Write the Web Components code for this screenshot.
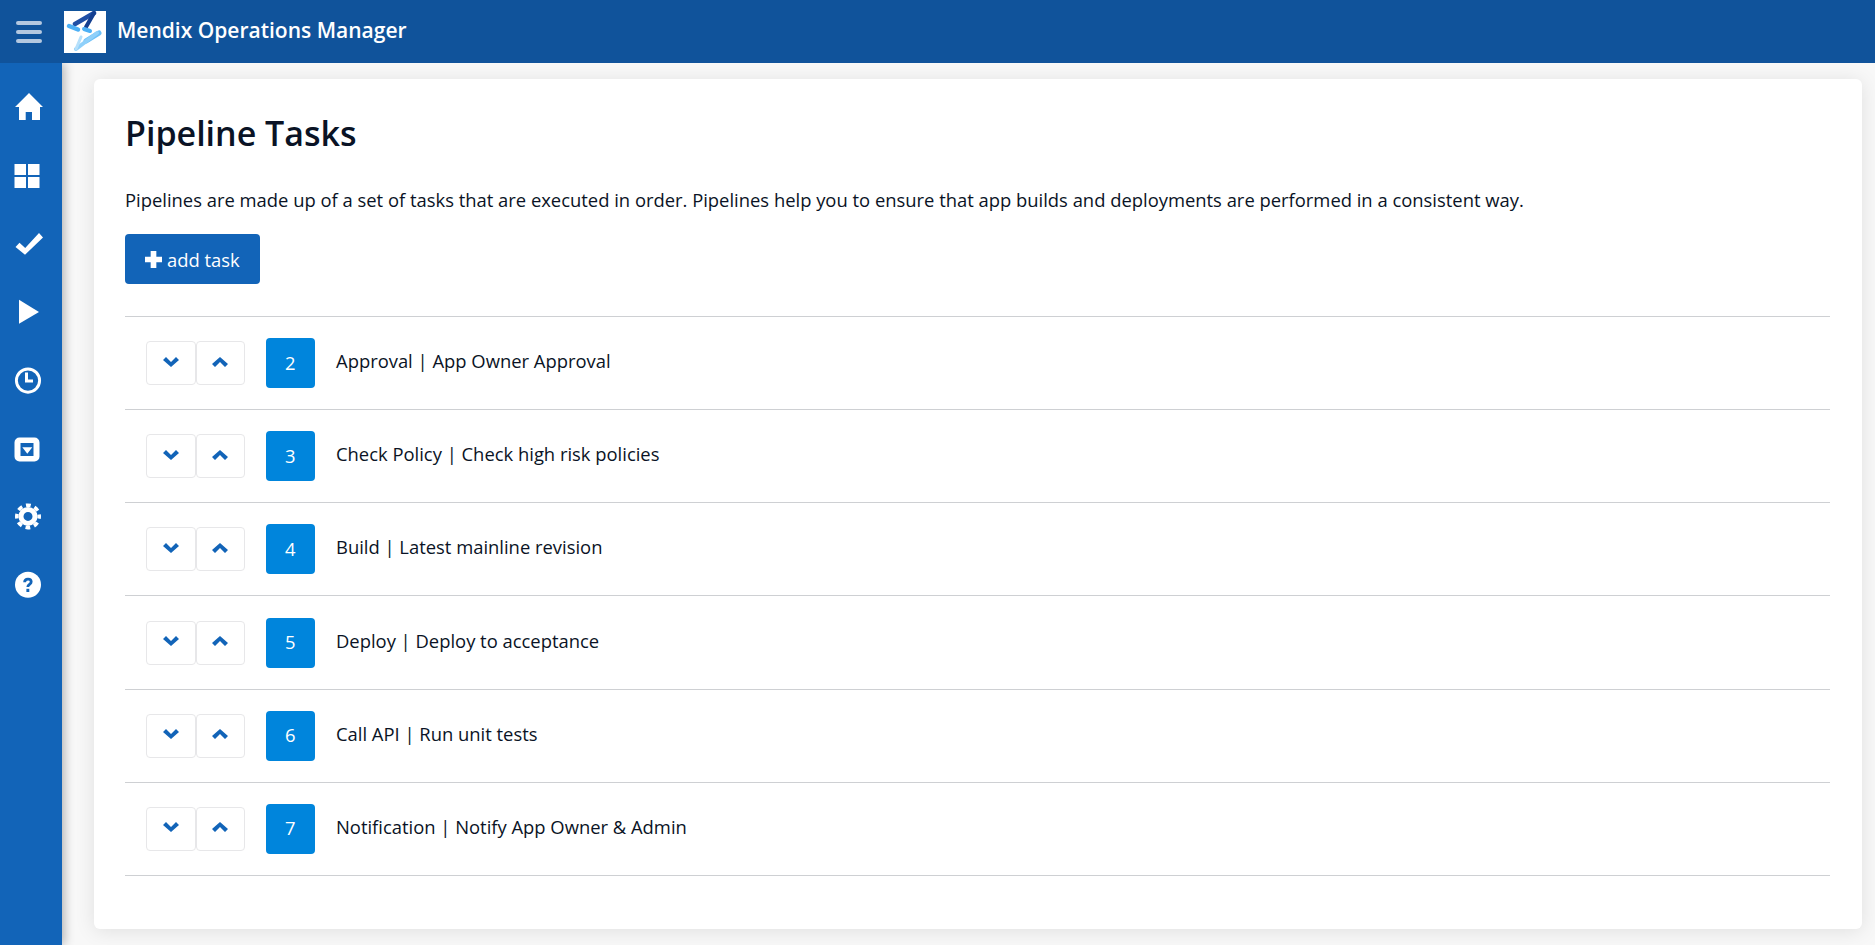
<!DOCTYPE html>
<html>
<head>
<meta charset="utf-8">
<title>Pipeline Tasks</title>
<style>
html, body { margin: 0; height: 100%; overflow: hidden; }
body { font-family: "Open Sans", sans-serif; color: #0a1325; background: #f8f8f8; }
</style>
</head>
<body>
<ops-layout>
	<ops-header slot="header" title="Mendix Operations Manager"></ops-header>
	<ops-sidebar slot="nav">
		<ops-nav-item icon="home"></ops-nav-item>
		<ops-nav-item icon="grid"></ops-nav-item>
		<ops-nav-item icon="check"></ops-nav-item>
		<ops-nav-item icon="play"></ops-nav-item>
		<ops-nav-item icon="clock"></ops-nav-item>
		<ops-nav-item icon="box"></ops-nav-item>
		<ops-nav-item icon="gear"></ops-nav-item>
		<ops-nav-item icon="help"></ops-nav-item>
	</ops-sidebar>
	<ops-card>
		<h1 slot="title">Pipeline Tasks</h1>
		<span slot="intro">Pipelines are made up of a set of tasks that are executed in order. Pipelines help you to ensure that app builds and deployments are performed in a consistent way.</span>
		<ops-add-button slot="action">add task</ops-add-button>
		<task-row order="2">Approval | App Owner Approval</task-row>
		<task-row order="3">Check Policy | Check high risk policies</task-row>
		<task-row order="4">Build | Latest mainline revision</task-row>
		<task-row order="5">Deploy | Deploy to acceptance</task-row>
		<task-row order="6">Call API | Run unit tests</task-row>
		<task-row order="7">Notification | Notify App Owner &amp; Admin</task-row>
	</ops-card>
</ops-layout>
<script>
// all icons sit in a 28x28 box, some run slightly over it like the icon font did
const ICONS = {
	home: '<path d="M15 0 1 14h4v13h6.700v-8h6.300v8h8V14h3z"/>',
	grid: '<path d="M.5 2.900H12V14H.5zM14 2.900h11.500V14H14zM.5 16H12v10.900H.5zM14 16h11.500v10.900H14z"/>',
	check: '<path d="M1.500 18 5.500 13.800l5.700 5.200L25 4l4 4.500L11 25.800z"/>',
	play: '<path d="M5 2.700 25 15 5 26.700z"/>',
	clock: '<circle cx="14" cy="15.600" r="11.600" fill="none" stroke="#fff" stroke-width="2.900"/><path d="M11 7.600h3v7h5v3h-8z"/>',
	box: '<path fill-rule="evenodd" d="M5.500 3.500h15a5 5 0 0 1 5 5v14a5 5 0 0 1-5 5h-15a5 5 0 0 1-5-5v-14a5 5 0 0 1 5-5zM6.500 9v13h13V9zM8.300 13.200h10l-5 6.600z"/>',
	gear: '<g fill="none" stroke="#fff"><circle cx="14" cy="14.400" r="11.200" stroke-width="3.600" stroke-dasharray="4.800 4" stroke-dashoffset="2.400"/><circle cx="14" cy="14.400" r="7" stroke-width="5"/></g>',
	help: '<circle cx="14" cy="14.800" r="13"/><path d="M10.600 12.200c.2-4 6.400-4.200 6.600-.4.1 2.600-3.400 2.600-3.400 5.200" fill="none" stroke="#1264b8" stroke-width="2.800"/><rect x="12.400" y="18.800" width="2.900" height="3.200" fill="#1264b8"/>'
};

class OpsLayout extends HTMLElement {
	constructor() {
		super();
		this.attachShadow({ mode: "open" });
		this.shadowRoot.innerHTML = `<style>
:host {
	display: grid;
	grid-template-columns: 62px 1fr;
	grid-template-rows: 63px 1fr;
	height: 100vh;
}
::slotted([slot=header]) { grid-column: 1 / 3; }
#main {
	min-width: 0;
	padding: 16px 13px 16px 32px;
	box-sizing: border-box;
	display: flex;
	min-height: 0;
}
</style>
<slot name="header"></slot>
<slot name="nav"></slot>
<div id="main"><slot></slot></div>`;
	}
}
customElements.define("ops-layout", OpsLayout);

class OpsHeader extends HTMLElement {
	constructor() {
		super();
		this.attachShadow({ mode: "open" });
		this.shadowRoot.innerHTML = `<style>
:host {
	display: flex;
	align-items: center;
	background: #10539b;
	color: #fff;
	height: 63px;
	position: relative;
	z-index: 2;
}
#burger {
	width: 62px;
	display: flex;
	flex-direction: column;
	align-items: center;
	gap: 5px;
	padding-right: 4px;
	box-sizing: border-box;
}
#burger i {
	display: block;
	width: 26px;
	height: 4px;
	border-radius: 2px;
	background: #b4c8e0;
}
#logo {
	width: 42px;
	height: 42px;
	margin-left: 2px;
	background: #fff;
	display: block;
}
#title {
	margin-left: 11px;
	padding-bottom: 3px;
	font-size: 21px;
	font-weight: 600;
}
</style>
<div id="burger"><i></i><i></i><i></i></div>
<svg id="logo" viewBox="0 0 42 42">
	<g fill="none" stroke-linecap="round" style="filter: blur(0.6px)">
		<path d="M30 2 11 13" stroke="#1f4fa5" stroke-width="4.500"/>
		<path d="M30 2 22 16" stroke="#143f90" stroke-width="4"/>
		<path d="M5 15l9 3.500" stroke="#4db0f5" stroke-width="4.500"/>
		<path d="M20 18l6 2" stroke="#4db0f5" stroke-width="4"/>
		<path d="M35 22l-13 8" stroke="#6cc0f8" stroke-width="5"/>
		<path d="M12 38l21-16" stroke="#8fd0fa" stroke-width="4"/>
		<path d="M12 38l5-12" stroke="#b6e0fb" stroke-width="3"/>
	</g>
</svg>
<div id="title"></div>`;
	}
	connectedCallback() {
		this.shadowRoot.querySelector("#title").textContent = this.getAttribute("title");
		this.removeAttribute("title");
	}
}
customElements.define("ops-header", OpsHeader);

class OpsSidebar extends HTMLElement {
	constructor() {
		super();
		this.attachShadow({ mode: "open" });
		this.shadowRoot.innerHTML = `<style>
:host {
	display: flex;
	flex-direction: column;
	background: #1264b8;
	padding-top: 10px;
	box-shadow: 2px 0 10px rgba(0,0,0,0.3);
	position: relative;
	z-index: 1;
}
</style><slot></slot>`;
	}
}
customElements.define("ops-sidebar", OpsSidebar);

class OpsNavItem extends HTMLElement {
	constructor() {
		super();
		this.attachShadow({ mode: "open" });
	}
	connectedCallback() {
		this.shadowRoot.innerHTML = `<style>
:host {
	display: flex;
	height: 68.100px;
	align-items: center;
	justify-content: center;
	padding-right: 6px;
	box-sizing: border-box;
}
svg { width: 28px; height: 28px; fill: #fff; display: block; overflow: visible; }
</style><svg viewBox="0 0 28 28">${ICONS[this.getAttribute("icon")]}</svg>`;
	}
}
customElements.define("ops-nav-item", OpsNavItem);

class OpsCard extends HTMLElement {
	constructor() {
		super();
		this.attachShadow({ mode: "open" });
		this.shadowRoot.innerHTML = `<style>
:host {
	display: block;
	flex: 1;
	background: #fff;
	border-radius: 6px;
	box-shadow: 0 2px 20px rgba(0,0,0,0.1);
	padding: 31px 32px 0 31px;
	box-sizing: border-box;
}
::slotted(h1) {
	margin: 0;
	font-size: 34px;
	line-height: 46px;
	font-weight: 600;
	color: #0a1325;
}
#intro {
	margin-top: 32px;
	font-size: 18.400px;
	line-height: 24px;
}
#action { margin-top: 22px; }
#list {
	margin-top: 32px;
	border-top: 1px solid #ced0d3;
}
</style>
<slot name="title"></slot>
<div id="intro"><slot name="intro"></slot></div>
<div id="action"><slot name="action"></slot></div>
<div id="list"><slot></slot></div>`;
	}
}
customElements.define("ops-card", OpsCard);

class OpsAddButton extends HTMLElement {
	constructor() {
		super();
		this.attachShadow({ mode: "open" });
		this.shadowRoot.innerHTML = `<style>
:host {
	display: inline-flex;
	align-items: center;
	gap: 5px;
	height: 50px;
	box-sizing: border-box;
	padding: 0 20px;
	background: #1264b8;
	border-radius: 4px;
	color: #fff;
	font-size: 18.400px;
	vertical-align: top;
}
svg { width: 17px; height: 17px; fill: #fff; display: block; }
</style>
<svg viewBox="0 0 18 18"><path d="M6 0h6v6h6v6h-6v6H6v-6H0V6h6z"/></svg>
<slot></slot>`;
	}
}
customElements.define("ops-add-button", OpsAddButton);

class TaskRow extends HTMLElement {
	constructor() {
		super();
		this.attachShadow({ mode: "open" });
	}
	connectedCallback() {
		this.shadowRoot.innerHTML = `<style>
:host {
	display: flex;
	align-items: center;
	height: 93.170px;
	box-sizing: border-box;
	padding-left: 21px;
	border-bottom: 1px solid #ced0d3;
	font-size: 18.400px;
}
.btn {
	width: 49.500px;
	height: 44px;
	box-sizing: border-box;
	border: 1px solid #e7e7e9;
	border-radius: 4px;
	background: #fff;
	display: flex;
	align-items: center;
	justify-content: center;
}
.btn svg { width: 16px; height: 10px; fill: #1264b8; display: block; margin-bottom: 3px; }
#badge {
	width: 49.500px;
	height: 50px;
	margin-left: 20.500px;
	margin-right: 21px;
	padding-bottom: 2px;
	box-sizing: border-box;
	background: #0085dc;
	color: #fff;
	border-radius: 4px;
	display: flex;
	align-items: center;
	justify-content: center;
	font-size: 18.400px;
}
#label { padding-bottom: 5px; }
</style>
<div class="btn"><svg viewBox="0 0 16 10"><path d="M0 3 3 0l5 5 5-5 3 3-8 7z"/></svg></div>
<div class="btn"><svg viewBox="0 0 16 10"><path d="M0 7l3 3 5-5 5 5 3-3-8-7z"/></svg></div>
<div id="badge">${this.getAttribute("order")}</div>
<div id="label"><slot></slot></div>`;
	}
}
customElements.define("task-row", TaskRow);
</script>
</body>
</html>
